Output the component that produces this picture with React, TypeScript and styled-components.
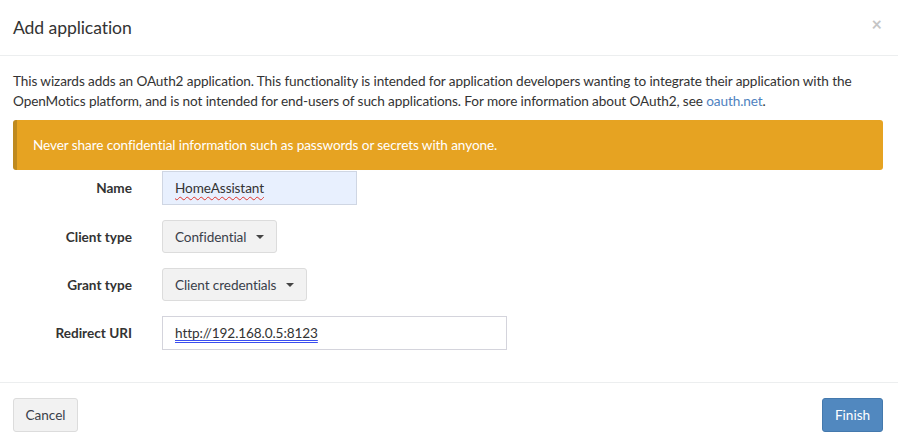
import React from "react";
import styled, { createGlobalStyle } from "styled-components";

const Global = createGlobalStyle`
  html, body { margin: 0; padding: 0; background: #fff; }
  body { font-family: Lato, "Liberation Sans", sans-serif; font-size: 14px; color: #333; }
  * { box-sizing: border-box; }
`;

const Modal = styled.div`
  width: 898px;
  height: 447px;
  background: #fff;
  display: flex;
  flex-direction: column;
`;

const Header = styled.div`
  height: 56px;
  padding: 0 13px;
  border-bottom: 1px solid #eceeef;
  display: flex;
  align-items: center;
  justify-content: space-between;
`;

const Title = styled.h4`
  margin: 0;
  font-size: 17.6px;
  font-weight: 400;
  color: #333;
  letter-spacing: -0.1px;
`;

const Close = styled.span`
  font-size: 18px;
  color: #c5c5c5;
  font-weight: 700;
  margin-right: 3px;
  margin-top: -8px;
`;

const Body = styled.div`
  padding: 16px 15px 0 13px;
  height: 327px;
  border-bottom: 1px solid #eceeef;
`;

const Intro = styled.p`
  margin: 0 0 9px 0;
  line-height: 19.5px;
  letter-spacing: -0.1px;
  font-size: 13.6px;
`;

const Link = styled.a`
  color: #4f82c0;
  text-decoration: none;
`;

const Alert = styled.div`
  height: 50px;
  background: #e6a322;
  border-left: 4px solid #bf8a1f;
  border-radius: 3px;
  padding: 0 16px;
  display: flex;
  align-items: center;
  color: #fff;
  font-size: 13.6px;
  letter-spacing: -0.1px;
  margin-bottom: 1px;
`;

const Form = styled.div`
  display: grid;
  grid-template-columns: 119px 1fr;
  column-gap: 30px;
  row-gap: 15px;
  align-items: center;
`;

const Label = styled.label`
  text-align: right;
  font-weight: 700;
  font-size: 13.6px;
  letter-spacing: 0px;
  color: #333;
`;

const Input = styled.div<{ $w: number; $autofill?: boolean }>`
  width: ${(p) => p.$w}px;
  height: 34px;
  border: 1px solid ${(p) => (p.$autofill ? "#cfd6e3" : "#d4d4dc")};
  background: ${(p) => (p.$autofill ? "#e8f0fe" : "#fff")};
  padding: 0 12px;
  display: flex;
  align-items: center;
  font-size: 13.6px;
  letter-spacing: -0.1px;
  color: #333;
`;

const Spell = styled.span`
  text-decoration: underline wavy #e0342a;
  text-decoration-thickness: 1px;
  text-underline-offset: 3px;
`;

const Url = styled.span`
  text-decoration: underline double #3a4ef0;
  text-underline-offset: 2px;
`;

const Select = styled.button<{ $w: number }>`
  width: ${(p) => p.$w}px;
  height: 33px;
  background: #f2f2f2;
  border: 1px solid #dcdcdc;
  border-radius: 3px;
  padding: 0 12px;
  display: flex;
  align-items: center;
  justify-content: space-between;
  font-family: inherit;
  font-size: 13.6px;
  letter-spacing: -0.1px;
  color: #3a3f4a;
`;

const Caret = styled.span`
  width: 0;
  height: 0;
  border-left: 4px solid transparent;
  border-right: 4px solid transparent;
  border-top: 4px solid #444;
`;

const Footer = styled.div`
  flex: 1;
  display: flex;
  justify-content: space-between;
  align-items: flex-start;
  padding: 15px 15px 0 13px;
`;

const Button = styled.button<{ $primary?: boolean; $w: number }>`
  width: ${(p) => p.$w}px;
  height: 34px;
  border-radius: 3px;
  font-family: inherit;
  font-size: 13.6px;
  letter-spacing: 0px;
  border: 1px solid ${(p) => (p.$primary ? "#4479ad" : "#dcdcdc")};
  background: ${(p) => (p.$primary ? "#5188bf" : "#f2f2f2")};
  color: ${(p) => (p.$primary ? "#fff" : "#3a3f4a")};
`;

export default function App() {
  return (
    <>
      <Global />
      <Modal>
        <Header>
          <Title>Add application</Title>
          <Close>×</Close>
        </Header>
        <Body>
          <Intro>
            This wizards adds an OAuth2 application. This functionality is intended for application developers
            wanting to integrate their application with the OpenMotics platform, and is not intended for end-users
            of such applications. For more information about OAuth2, see <Link href="#">oauth.net</Link>.
          </Intro>
          <Alert>Never share confidential information such as passwords or secrets with anyone.</Alert>
          <Form>
            <Label>Name</Label>
            <Input $w={195} $autofill>
              <Spell>HomeAssistant</Spell>
            </Input>
            <Label>Client type</Label>
            <Select $w={115}>
              Confidential <Caret />
            </Select>
            <Label>Grant type</Label>
            <Select $w={145}>
              Client credentials <Caret />
            </Select>
            <Label>Redirect URI</Label>
            <Input $w={345}>
              <Url>http://192.168.0.5:8123</Url>
            </Input>
          </Form>
        </Body>
        <Footer>
          <Button $w={65}>Cancel</Button>
          <Button $w={61} $primary>
            Finish
          </Button>
        </Footer>
      </Modal>
    </>
  );
}
